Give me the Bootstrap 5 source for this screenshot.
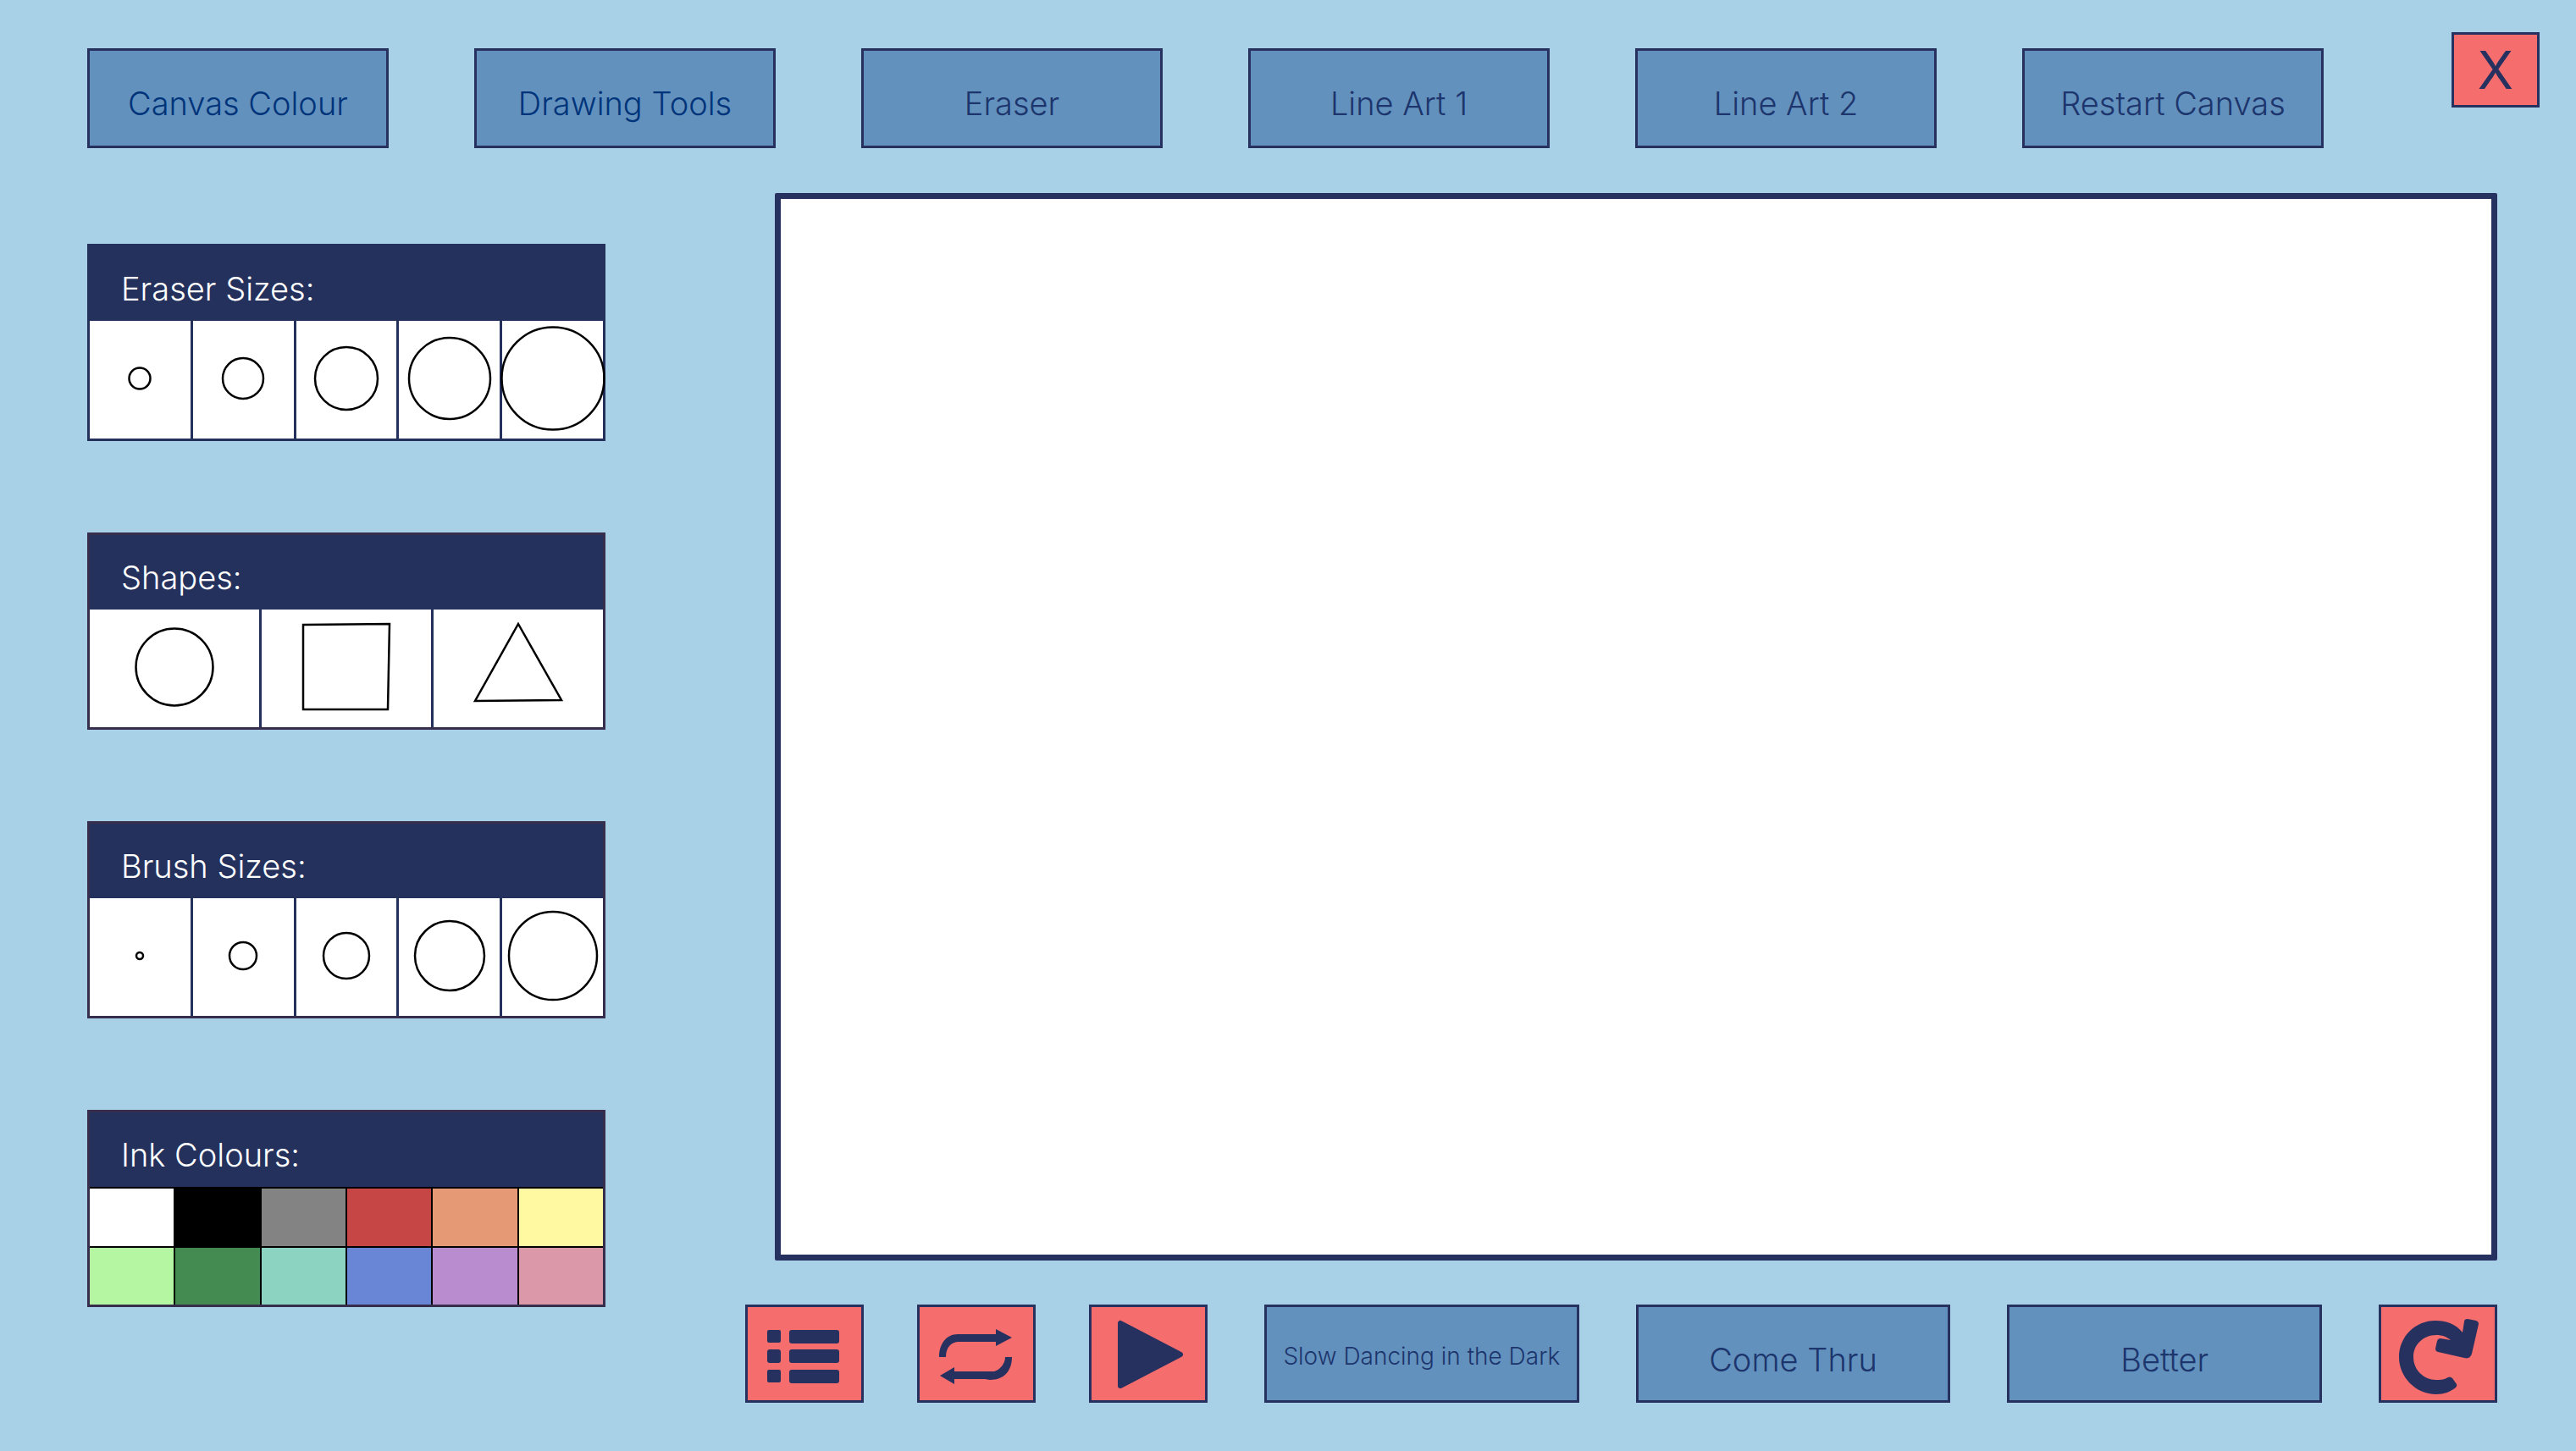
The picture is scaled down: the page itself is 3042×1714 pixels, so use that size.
<!DOCTYPE html>
<html lang="en">
<head>
<meta charset="utf-8">
<meta name="viewport" content="width=device-width, initial-scale=1">
<title>Drawing Canvas</title>
<link href="https://cdn.jsdelivr.net/npm/bootstrap@5.3.0/dist/css/bootstrap.min.css" rel="stylesheet">
<style>
  :root { --navy: #26315f; --sky: #a8d1e7; --steel: #6391be; --coral: #f66d6e; --plum: #372d4d; }
  body { background: var(--sky); font-family: Inter, "Liberation Sans", sans-serif; font-weight: 300; color: var(--navy); }
  .top-bar { padding: 38px 43px 0 103px; }
  .menu-list { gap: 101px; padding-top: 19px; margin-right: 151px; }
  .paint-btn { --bs-btn-border-radius: 0; --bs-btn-border-width: 3px; --bs-btn-font-weight: 300; --bs-btn-font-size: 38px; --bs-btn-line-height: 44px;
    --bs-btn-bg: var(--steel); --bs-btn-color: #1c356c; --bs-btn-border-color: var(--navy);
    --bs-btn-hover-bg: #5584b3; --bs-btn-hover-color: #1c356c; --bs-btn-hover-border-color: var(--navy);
    --bs-btn-padding-x: 0; --bs-btn-padding-y: 0; white-space: nowrap; }
  .menu-list .paint-btn { height: 118px; padding-top: 12px; }
  .menu-list .deep-ink { --bs-btn-color: #00347a; }
  .coral-btn { --bs-btn-bg: var(--coral); --bs-btn-hover-bg: #e85c5e; --bs-btn-color: var(--navy); width: 140px; height: 116px; }
  .coral-btn svg { display: block; width: 134px; height: 110px; fill: var(--navy); }
  .close-btn { width: 104px; height: 89px; --bs-btn-font-size: 62px; --bs-btn-line-height: 80px; --bs-btn-font-weight: 400; }
  .work-area { padding: 53px 93px 57px 103px; gap: 200px; }
  .side-panels { width: 612px; gap: 109px; padding-top: 60px; }
  .tool-panel { height: 233px; border: 3px solid var(--plum); margin-bottom: -1px; }
  .tool-panel.navy-edge { border-color: #24315d; }
  .panel-title { background: #24315d; color: #fff; height: 88px; padding: 12px 37px 0; font-size: 38px; line-height: 76px; font-weight: 300; }
  .choice { border: 0; background: #fff; min-width: 0; padding: 0 0 3px; }
  .choice + .choice { border-left: 3px solid #24315d; }
  .choice svg { fill: none; stroke: #000; stroke-width: 2.5; overflow: visible; flex: none; }
  .ink-grid { display: grid; grid-template-columns: repeat(6, 1fr); grid-template-rows: 1fr 1fr; gap: 2px; background: #000; border-top: 2px solid #000; }
  .ink { border: 0; padding: 0; }
  .stage { gap: 52px; min-width: 0; }
  .canvas-frame { border: 7px solid var(--navy); background: #fff; border-radius: 2px; min-height: 400px; }
  .player { gap: 67px; margin-left: -35px; }
  .player-icons { gap: 63px; }
  .song { height: 116px; padding-top: 14px; }
  .song.long-name { --bs-btn-font-size: 28px; padding-top: 6px; }
</style>
</head>
<body class="min-vh-100 d-flex flex-column">
<header class="top-bar d-flex align-items-start">
  <nav class="menu-list d-flex flex-grow-1" aria-label="Canvas menu">
    <button type="button" class="btn paint-btn deep-ink col">Canvas Colour</button>
    <button type="button" class="btn paint-btn deep-ink col">Drawing Tools</button>
    <button type="button" class="btn paint-btn col">Eraser</button>
    <button type="button" class="btn paint-btn col">Line Art 1</button>
    <button type="button" class="btn paint-btn col">Line Art 2</button>
    <button type="button" class="btn paint-btn col">Restart Canvas</button>
  </nav>
  <button type="button" class="btn paint-btn coral-btn close-btn">X</button>
</header>

<main class="work-area d-flex flex-grow-1">
  <aside class="side-panels d-flex flex-column flex-shrink-0">
    <section class="tool-panel navy-edge d-flex flex-column">
      <h2 class="panel-title m-0">Eraser Sizes:</h2>
      <div class="d-flex flex-grow-1">
        <button type="button" class="choice col d-flex align-items-center justify-content-center" aria-label="Eraser 1"><svg width="28" height="28"><circle cx="14" cy="14" r="12.5"/></svg></button>
        <button type="button" class="choice col d-flex align-items-center justify-content-center" aria-label="Eraser 2"><svg width="50" height="50"><circle cx="25" cy="25" r="24"/></svg></button>
        <button type="button" class="choice col d-flex align-items-center justify-content-center" aria-label="Eraser 3"><svg width="76" height="76"><circle cx="38" cy="38" r="37"/></svg></button>
        <button type="button" class="choice col d-flex align-items-center justify-content-center" aria-label="Eraser 4"><svg width="98" height="98"><circle cx="49" cy="49" r="48"/></svg></button>
        <button type="button" class="choice col d-flex align-items-center justify-content-center" aria-label="Eraser 5"><svg width="122" height="122"><circle cx="61" cy="61" r="60.5"/></svg></button>
      </div>
    </section>
    <section class="tool-panel d-flex flex-column">
      <h2 class="panel-title m-0">Shapes:</h2>
      <div class="d-flex flex-grow-1">
        <button type="button" class="choice col d-flex align-items-center justify-content-center" aria-label="Circle"><svg width="104" height="104"><circle cx="52" cy="52" r="45.5"/></svg></button>
        <button type="button" class="choice col d-flex align-items-center justify-content-center" aria-label="Square"><svg width="104" height="104"><path d="M1 2 103 1 101 102H1z"/></svg></button>
        <button type="button" class="choice col d-flex align-items-center justify-content-center" aria-label="Triangle"><svg width="104" height="104"><path d="M52 1 103 91 1 92z"/></svg></button>
      </div>
    </section>
    <section class="tool-panel d-flex flex-column">
      <h2 class="panel-title m-0">Brush Sizes:</h2>
      <div class="d-flex flex-grow-1">
        <button type="button" class="choice col d-flex align-items-center justify-content-center" aria-label="Brush 1"><svg width="10" height="10"><circle cx="5" cy="5" r="4"/></svg></button>
        <button type="button" class="choice col d-flex align-items-center justify-content-center" aria-label="Brush 2"><svg width="34" height="34"><circle cx="17" cy="17" r="16"/></svg></button>
        <button type="button" class="choice col d-flex align-items-center justify-content-center" aria-label="Brush 3"><svg width="56" height="56"><circle cx="28" cy="28" r="27"/></svg></button>
        <button type="button" class="choice col d-flex align-items-center justify-content-center" aria-label="Brush 4"><svg width="84" height="84"><circle cx="42" cy="42" r="41"/></svg></button>
        <button type="button" class="choice col d-flex align-items-center justify-content-center" aria-label="Brush 5"><svg width="106" height="106"><circle cx="53" cy="53" r="52"/></svg></button>
      </div>
    </section>
    <section class="tool-panel d-flex flex-column">
      <h2 class="panel-title m-0">Ink Colours:</h2>
      <div class="ink-grid flex-grow-1">
        <button type="button" class="ink" aria-label="White" style="background:#fff"></button>
        <button type="button" class="ink" aria-label="Black" style="background:#000"></button>
        <button type="button" class="ink" aria-label="Grey" style="background:#838383"></button>
        <button type="button" class="ink" aria-label="Red" style="background:#c54644"></button>
        <button type="button" class="ink" aria-label="Orange" style="background:#e69975"></button>
        <button type="button" class="ink" aria-label="Yellow" style="background:#fff9a1"></button>
        <button type="button" class="ink" aria-label="Light green" style="background:#b4f6a2"></button>
        <button type="button" class="ink" aria-label="Green" style="background:#448b52"></button>
        <button type="button" class="ink" aria-label="Teal" style="background:#8cd3c1"></button>
        <button type="button" class="ink" aria-label="Blue" style="background:#6985d5"></button>
        <button type="button" class="ink" aria-label="Purple" style="background:#b98cd0"></button>
        <button type="button" class="ink" aria-label="Pink" style="background:#da98a9"></button>
      </div>
    </section>
  </aside>

  <div class="stage d-flex flex-column flex-grow-1">
    <div class="canvas-frame flex-grow-1" role="img" aria-label="Canvas"></div>
    <div class="player d-flex">
      <div class="player-icons d-flex">
        <button type="button" class="btn paint-btn coral-btn" aria-label="Playlist"><svg viewBox="3 3 134 110"><rect x="26" y="30" width="16" height="15" rx="2"/><rect x="26" y="53" width="16" height="16" rx="3"/><rect x="26" y="77" width="16" height="15" rx="2"/><rect x="52" y="30" width="59" height="16" rx="3"/><rect x="52" y="53" width="59" height="16" rx="3"/><rect x="52" y="77" width="59" height="16" rx="3"/></svg></button>
        <button type="button" class="btn paint-btn coral-btn" aria-label="Repeat"><svg viewBox="3 3 134 110"><path d="M26 62C26 46 35 35 48 35H93V29L112 39 93 49V44H49C41 44 34 50 34 62zM104 62H112C112 78 103 89 86 89L80 88H44V94L27 84 44 74V79H91C98 77 104 70 104 62z"/></svg></button>
        <button type="button" class="btn paint-btn coral-btn" aria-label="Play"><svg viewBox="3 3 134 110"><path d="M37 22V96L108 59z" stroke="#26315f" stroke-width="6" stroke-linejoin="round"/></svg></button>
      </div>
      <button type="button" class="btn paint-btn song long-name col">Slow Dancing in the Dark</button>
      <button type="button" class="btn paint-btn song col">Come Thru</button>
      <button type="button" class="btn paint-btn song col">Better</button>
      <button type="button" class="btn paint-btn coral-btn" aria-label="Restart song"><svg viewBox="3 3 134 110"><path d="M99 33C91 23 80 19 67 19 43 19 24 38 24 62S44 106 68 106C77 106 85 103 91 98Q93 96 92 94L87 87Q84 84 80 87C76 89 72 89 68 89 53 89 41 77 41 62S53 36 68 36C75 36 80 38 85 42L73 40Q70 40 69 43L67 52Q67 55 70 56L101 63Q108 65 110 58L118 23Q118 20 115 19L105 17Q101 17 101 20z"/></svg></button>
    </div>
  </div>
</main>
<script src="https://cdn.jsdelivr.net/npm/bootstrap@5.3.0/dist/js/bootstrap.bundle.min.js"></script>
</body>
</html>
